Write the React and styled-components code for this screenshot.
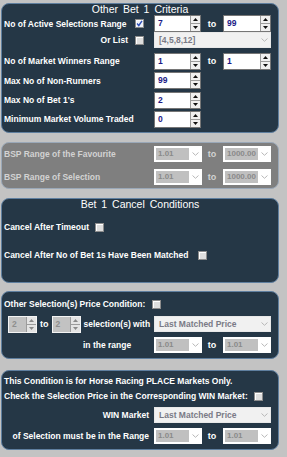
import styled, { createGlobalStyle } from "styled-components";

const GlobalStyle = createGlobalStyle`
  html, body {
    margin: 0;
    background: #c3c3c3;
  }
  body {
    font-family: "Liberation Sans", Arial, sans-serif;
  }
`;

const Page = styled.div`
  display: flex;
  flex-direction: column;
  padding: 3px 0 7px 1px;
  width: 278px;
`;

const Panel = styled.div`
  box-sizing: border-box;
  height: ${(p) => p.$h}px;
  margin-top: ${(p) => p.$mt || 0}px;
  padding-top: ${(p) => p.$pt || 0}px;
  border: 1px solid ${(p) => (p.$off ? "#9aa8b8" : "#5f7f9f")};
  border-radius: 8px;
  background: ${(p) => (p.$off ? "#7f7f7f" : "#253746")};
  display: flex;
  flex-direction: column;
  gap: ${(p) => p.$gap || 0}px;
`;

const Title = styled.div`
  height: 11px;
  line-height: 11px;
  text-align: center;
  color: #fff;
  font-size: 10.5px;
  word-spacing: 2px;
`;

const Row = styled.div`
  display: grid;
  grid-template-columns: 150px 47px 22px 48px;
  align-items: center;
  height: ${(p) => p.$h || 18}px;
  margin-top: ${(p) => p.$mt || 0}px;
  padding-left: 2px;
`;

const LineRow = styled.div`
  display: flex;
  align-items: center;
  height: ${(p) => p.$h || 18}px;
  margin-top: ${(p) => p.$mt || 0}px;
  padding-left: ${(p) => p.$pl || 2}px;
  gap: ${(p) => p.$gap || 6}px;
`;

const LabelCell = styled.div`
  display: flex;
  align-items: center;
  justify-content: ${(p) => (p.$right ? "flex-end" : "flex-start")};
  gap: 7px;
  padding-right: ${(p) => p.$pr || 0}px;
  padding-left: ${(p) => p.$pl || 0}px;
  height: 100%;
`;

const Wide = styled.div`
  grid-column: 2 / 5;
`;

const Label = styled.span`
  flex: ${(p) => (p.$grow ? 1 : "none")};
  text-align: ${(p) => (p.$right ? "right" : "left")};
  color: ${(p) => (p.$off ? "#d2d2d2" : "#fff")};
  font-size: 8.5px;
  font-weight: bold;
  white-space: nowrap;
`;

const To = styled.span`
  text-align: center;
  color: ${(p) => (p.$off ? "#d2d2d2" : "#fff")};
  font-size: 9px;
  font-weight: bold;
`;

const Box = styled.span`
  box-sizing: border-box;
  display: inline-flex;
  align-items: center;
  justify-content: center;
  flex: none;
  width: 9px;
  height: 9px;
  border: 1px solid #8c8c8c;
  background: ${(p) => (p.$on ? "#eef2fa" : "#dedede")};
  box-shadow: inset 1px 1px 0 #ffffff;
`;

const SpinBox = styled.div`
  box-sizing: border-box;
  display: flex;
  width: ${(p) => p.$w}px;
  height: 17px;
  border: 1px solid ${(p) => (p.$off ? "#f4f4f4" : "#767676")};
  background: ${(p) => (p.$off ? "#c2c2c2" : "#fff")};
`;

const SpinValue = styled.span`
  flex: 1;
  padding-left: 3px;
  line-height: 15px;
  font-size: 8.5px;
  font-weight: bold;
  color: ${(p) => (p.$off ? "#8e8e8e" : "#1c1a86")};
`;

const SpinButtons = styled.div`
  width: 9px;
  display: flex;
  flex-direction: column;
  background: ${(p) => (p.$off ? "#e4e4e4" : "#f0f0f0")};
  border-left: 1px solid #9c9c9c;
`;

const SpinBtn = styled.div`
  flex: 1;
  display: flex;
  align-items: center;
  justify-content: center;
  & + & {
    border-top: 1px solid #9c9c9c;
  }
`;

const SelectBox = styled.div`
  box-sizing: border-box;
  display: flex;
  width: ${(p) => p.$w}px;
  height: 16px;
  border: 1px solid ${(p) => (p.$light ? "#e8e8e8" : "#ffffff")};
  background: ${(p) => (p.$light ? "#f1f1f1" : "#ffffff")};
`;

const SelectText = styled.span`
  flex: 1;
  margin: ${(p) => (p.$light ? 0 : 1)}px;
  padding-left: ${(p) => (p.$light ? 4 : 2)}px;
  line-height: ${(p) => (p.$light ? 14 : 12)}px;
  background: ${(p) => (p.$light ? "transparent" : "#c0c0c0")};
  color: ${(p) => (p.$light ? "#7a7a86" : "#8a8a8a")};
  font-size: ${(p) => (p.$light ? 8.5 : 8)}px;
  font-weight: bold;
  white-space: nowrap;
  overflow: hidden;
`;

const Chevron = styled.span`
  width: 11px;
  display: flex;
  align-items: center;
  justify-content: center;
`;

function Check({ on }) {
  return (
    <Box $on={on}>
      {on && (
        <svg width="7" height="7" viewBox="0 0 7 7">
          <path d="M1 3.5 L2.8 5.5 L6 0.8" fill="none" stroke="#2f4fb8" strokeWidth="1.4" />
        </svg>
      )}
    </Box>
  );
}

function Arrow({ up, off }) {
  return (
    <svg width="5" height="3" viewBox="0 0 5 3">
      <path d={up ? "M0 3 L2.5 0 L5 3Z" : "M0 0 L2.5 3 L5 0Z"} fill={off ? "#8a8a8a" : "#111"} />
    </svg>
  );
}

function Spinner({ value, w = 47, off }) {
  return (
    <SpinBox $w={w} $off={off}>
      <SpinValue $off={off}>{value}</SpinValue>
      <SpinButtons $off={off}>
        <SpinBtn>
          <Arrow up off={off} />
        </SpinBtn>
        <SpinBtn>
          <Arrow off={off} />
        </SpinBtn>
      </SpinButtons>
    </SpinBox>
  );
}

function Select({ value, w = 48, light }) {
  return (
    <SelectBox $w={w} $light={light}>
      <SelectText $light={light}>{value}</SelectText>
      <Chevron>
        <svg width="7" height="4" viewBox="0 0 7 4">
          <path d="M0.5 0.5 L3.5 3.3 L6.5 0.5" fill="none" stroke="#b8b8b8" strokeWidth="1" />
        </svg>
      </Chevron>
    </SelectBox>
  );
}

export default function App() {
  return (
    <>
      <GlobalStyle />
      <Page>
        <Panel $h={130}>
          <Title>Other Bet 1 Criteria</Title>
          <Row $h={17}>
            <LabelCell $pr={10}>
              <Label $grow>No of Active Selections Range</Label>
              <Check on />
            </LabelCell>
            <Spinner value="7" />
            <To>to</To>
            <Spinner value="99" w={48} />
          </Row>
          <Row $h={16}>
            <LabelCell $right $pr={10}>
              <Label $right>Or List</Label>
              <Check />
            </LabelCell>
            <Wide>
              <Select value="[4,5,8,12]" w={117} light />
            </Wide>
          </Row>
          <Row $h={20} $mt={3}>
            <Label>No of Market Winners Range</Label>
            <Spinner value="1" />
            <To>to</To>
            <Spinner value="1" w={48} />
          </Row>
          <Row $h={19}>
            <Label>Max No of Non-Runners</Label>
            <Spinner value="99" />
          </Row>
          <Row $h={20}>
            <Label>Max No of Bet 1's</Label>
            <Spinner value="2" />
          </Row>
          <Row $h={18}>
            <Label>Minimum Market Volume Traded</Label>
            <Spinner value="0" />
          </Row>
        </Panel>

        <Panel $h={47} $mt={9} $pt={2} $gap={5} $off>
          <Row>
            <Label $off>BSP Range of the Favourite</Label>
            <Select value="1.01" />
            <To $off>to</To>
            <Select value="1000.00" />
          </Row>
          <Row>
            <Label $off>BSP Range of Selection</Label>
            <Select value="1.01" />
            <To $off>to</To>
            <Select value="1000.00" />
          </Row>
        </Panel>

        <Panel $h={85} $mt={9}>
          <Title>Bet 1 Cancel Conditions</Title>
          <LineRow $mt={8}>
            <Label>Cancel After Timeout</Label>
            <Check />
          </LineRow>
          <LineRow $mt={10} $gap={10}>
            <Label>Cancel After No of Bet 1s Have Been Matched</Label>
            <Check />
          </LineRow>
        </Panel>

        <Panel $h={68} $mt={8} $pt={3}>
          <LineRow $gap={7}>
            <Label>Other Selection(s) Price Condition:</Label>
            <Check />
          </LineRow>
          <Row $mt={2}>
            <LabelCell>
              <LineRow $pl={4} $gap={3}>
                <Spinner value="2" w={29} off />
                <To>to</To>
                <Spinner value="2" w={29} off />
                <Label>selection(s) with</Label>
              </LineRow>
            </LabelCell>
            <Wide>
              <Select value="Last Matched Price" w={117} light />
            </Wide>
          </Row>
          <Row $mt={3}>
            <LabelCell $pl={79}>
              <Label>in the range</Label>
            </LabelCell>
            <Select value="1.01" />
            <To>to</To>
            <Select value="1.01" />
          </Row>
        </Panel>

        <Panel $h={80} $mt={11} $pt={3}>
          <LineRow $h={14}>
            <Label>This Condition is for Horse Racing PLACE Markets Only.</Label>
          </LineRow>
          <LineRow $h={14} $mt={1}>
            <Label>Check the Selection Price in the Corresponding WIN Market:</Label>
            <Check />
          </LineRow>
          <Row $mt={3}>
            <LabelCell $right $pr={5}>
              <Label $right>WIN Market</Label>
            </LabelCell>
            <Wide>
              <Select value="Last Matched Price" w={117} light />
            </Wide>
          </Row>
          <Row $mt={3}>
            <LabelCell $right $pr={5}>
              <Label $right>of Selection must be in the Range</Label>
            </LabelCell>
            <Select value="1.01" />
            <To>to</To>
            <Select value="1.01" />
          </Row>
        </Panel>
      </Page>
    </>
  );
}
